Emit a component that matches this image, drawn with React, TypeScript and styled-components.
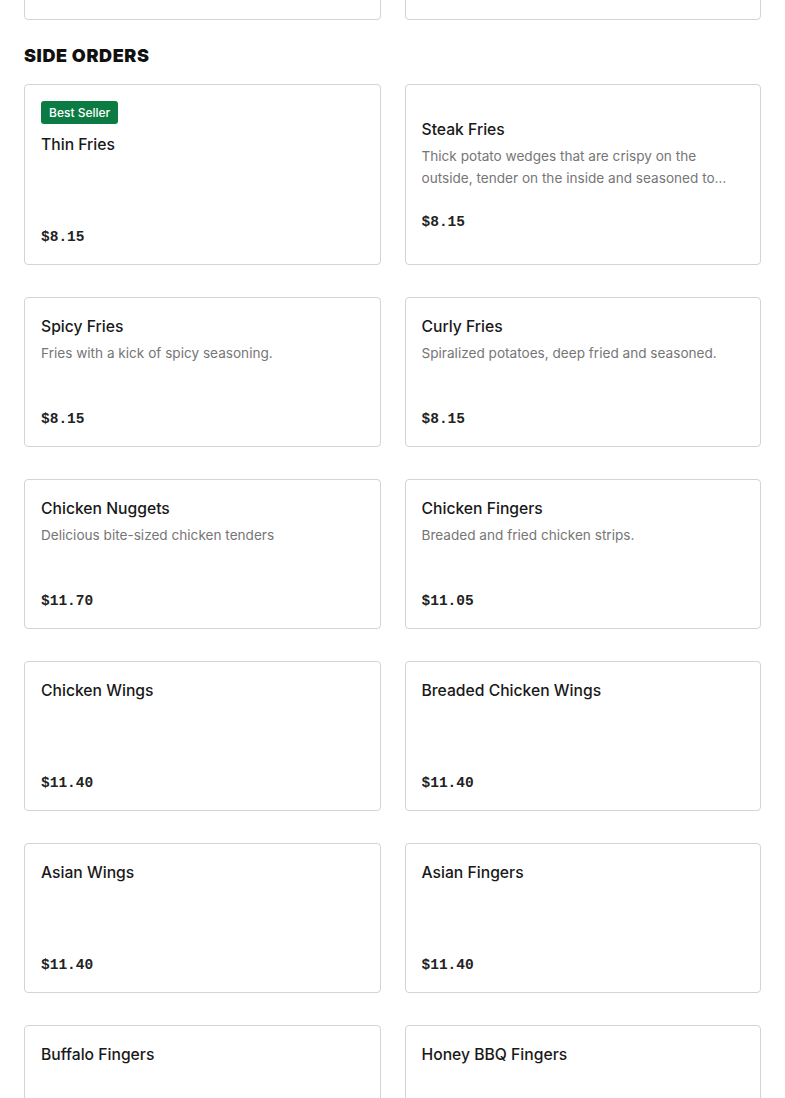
import styled, { createGlobalStyle } from "styled-components";

const GlobalStyle = createGlobalStyle`
  html, body {
    margin: 0;
    padding: 0;
    background: #ffffff;
  }
  body {
    font-family: Inter, "Noto Sans", "Liberation Sans", sans-serif;
    color: #191919;
    overflow: hidden;
  }
`;

const Page = styled.main`
  padding: 0 24px;
  margin-top: -130px;
`;

const Section = styled.section`
  & + & {
    margin-top: 24px;
  }
`;

const Heading = styled.h2`
  margin: 0 0 16px;
  font-family: Inter, "Liberation Sans", sans-serif;
  font-size: 18px;
  line-height: 24px;
  font-weight: 900;
  letter-spacing: 0.6px;
  color: #111111;
`;

const Grid = styled.div`
  display: grid;
  grid-template-columns: 1fr 1fr;
  column-gap: 24px;
  row-gap: 32px;
`;

const Card = styled.div`
  display: flex;
  flex-direction: column;
  justify-content: center;
  border: 1px solid #d4d4d4;
  border-radius: 4px;
  padding: 16px;
  background: #fff;
  cursor: pointer;
`;

const Badge = styled.span`
  align-self: flex-start;
  height: 23px;
  line-height: 23px;
  padding: 0 8px;
  margin-bottom: 8px;
  border-radius: 3px;
  background: #0b7a43;
  color: #ffffff;
  font-size: 12px;
  font-weight: 500;
`;

const Title = styled.h3`
  margin: 0;
  padding-top: 1px;
  font-size: 15.7px;
  line-height: 24px;
  font-weight: 500;
  color: #191919;
`;

const Description = styled.p`
  margin: 3px 0 0;
  min-height: 44px;
  font-size: 13.6px;
  line-height: 22px;
  color: #767676;
  display: -webkit-box;
  -webkit-line-clamp: 2;
  -webkit-box-orient: vertical;
  overflow: hidden;
`;

const Price = styled.span`
  margin-top: 22px;
  font-family: "Liberation Mono", "DejaVu Sans Mono", monospace;
  font-size: 14.5px;
  line-height: 22px;
  font-weight: 700;
  color: #222222;
`;

type Item = {
  name: string;
  description?: string;
  price: string;
  badge?: string;
};

const previous: Item[] = [
  { name: "Double Burger", price: "$9.95" },
  { name: "Veggie Burger", price: "$8.45" },
];

const sides: Item[] = [
  { name: "Thin Fries", price: "$8.15", badge: "Best Seller" },
  {
    name: "Steak Fries",
    description:
      "Thick potato wedges that are crispy on the outside, tender on the inside and seasoned to perfection.",
    price: "$8.15",
  },
  {
    name: "Spicy Fries",
    description: "Fries with a kick of spicy seasoning.",
    price: "$8.15",
  },
  {
    name: "Curly Fries",
    description: "Spiralized potatoes, deep fried and seasoned.",
    price: "$8.15",
  },
  {
    name: "Chicken Nuggets",
    description: "Delicious bite-sized chicken tenders",
    price: "$11.70",
  },
  {
    name: "Chicken Fingers",
    description: "Breaded and fried chicken strips.",
    price: "$11.05",
  },
  { name: "Chicken Wings", price: "$11.40" },
  { name: "Breaded Chicken Wings", price: "$11.40" },
  { name: "Asian Wings", price: "$11.40" },
  { name: "Asian Fingers", price: "$11.40" },
  { name: "Buffalo Fingers", price: "$11.40" },
  { name: "Honey BBQ Fingers", price: "$11.40" },
];

const MenuCard = ({ item }: { item: Item }) => (
  <Card>
    {item.badge && <Badge>{item.badge}</Badge>}
    <Title>{item.name}</Title>
    <Description>{item.description}</Description>
    <Price>{item.price}</Price>
  </Card>
);

const App = () => {
  return (
    <>
      <GlobalStyle />
      <Page>
        <Section>
          <Grid>
            {previous.map((item, idx) => (
              <MenuCard key={idx} item={item} />
            ))}
          </Grid>
        </Section>

        <Section>
          <Heading>SIDE ORDERS</Heading>
          <Grid>
            {sides.map((item, idx) => (
              <MenuCard key={idx} item={item} />
            ))}
          </Grid>
        </Section>
      </Page>
    </>
  );
};

export default App;
